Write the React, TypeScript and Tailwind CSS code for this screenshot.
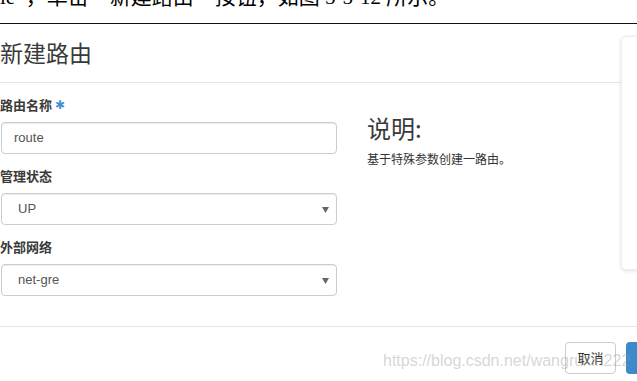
import React from 'react';

const cjk = { fontFamily: '"Noto Sans CJK SC", sans-serif' };

const Caret: React.FC = () => (
  <svg width="7" height="6" viewBox="0 0 7 6" className="absolute right-[7px] top-[13px]">
    <path d="M0 0 H7 L3.5 6 Z" fill="#666" />
  </svg>
);

interface FieldProps {
  label: string;
  value: string;
  required?: boolean;
  select?: boolean;
}

const Field: React.FC<FieldProps> = ({ label, value, required, select }) => (
  <div className="flex flex-col">
    <div className="flex items-center text-[13px] leading-[18px] font-bold text-[#3a3a3a] mb-[8px]">
      <span>{label}</span>
      {required && (
        <span className="ml-[3px] text-[12px] text-[#3d8fd8]" style={{ fontFamily: '"DejaVu Sans", sans-serif' }}>
          ✱
        </span>
      )}
    </div>
    <div className="relative h-[32px] ml-px border border-[#ccc] rounded-[4px] bg-white shadow-[inset_0_1px_1px_rgba(0,0,0,0.075)] flex items-center">
      <span
        className={`${select ? 'pl-[16px]' : 'pl-[12px]'} text-[13px] text-[#555]`}
        style={{ fontFamily: '"Liberation Sans", Arial, sans-serif' }}
      >
        {value}
      </span>
      {select && <Caret />}
    </div>
  </div>
);

export default function App() {
  return (
    <div className="relative w-[637px] h-[381px] overflow-hidden bg-white" style={cjk}>
      <div className="h-[24px] overflow-hidden border-b border-[#111]">
        <p
          className="-mt-[15px] text-[21px] leading-[21px] text-black whitespace-nowrap"
          style={{ fontFamily: '"Liberation Serif", "Noto Sans CJK SC", serif' }}
        >
          ie<span style={cjk}>”，</span>单击<span style={cjk}>“</span>新建路由<span style={cjk}>”</span>按钮<span style={cjk}>，</span>如图 5-5-12 所示<span style={cjk}>。</span>
        </p>
      </div>

      <div className="w-[720px]">
        <div className="h-[59px] flex items-center border-b border-[#e5e5e5]">
          <h2 className="text-[23px] leading-[26px] text-[#3a3a3a] font-normal -mt-[2px]">新建路由</h2>
        </div>

        <div className="flex pt-[13px] pb-[30px]">
          <div className="w-[337px] flex flex-col gap-[13px]">
            <Field label="路由名称" value="route" required />
            <Field label="管理状态" value="UP" select />
            <Field label="外部网络" value="net-gre" select />
          </div>
          <div className="ml-[30px] pt-[19px]">
            <h3 className="text-[24px] leading-[26px] text-[#3a3a3a] font-normal">说明:</h3>
            <p className="mt-[9px] text-[12px] leading-[17px] text-[#333]">基于特殊参数创建一路由。</p>
          </div>
        </div>

        <div className="border-t border-[#e5e5e5] pt-[15px] flex">
          <div className="ml-[565px] flex gap-[10px]">
            <button className="h-[32px] w-[51px] border border-[#ccc] rounded-[4px] bg-white text-[13px] text-[#333]">
              取消
            </button>
            <button className="h-[32px] px-[12px] rounded-[4px] bg-[#3b8acb] text-[13px] text-white">
              创建路由
            </button>
          </div>
        </div>
      </div>

      <div className="absolute left-[621px] top-[36px] w-[40px] h-[234px] bg-white rounded-[5px] border border-[#eee] shadow-[0_1px_4px_rgba(0,0,0,0.12)]" />

      <div
        className="absolute left-[383px] top-[350px] text-[16px] leading-[22px] text-[rgba(150,150,150,0.4)] whitespace-nowrap pointer-events-none"
        style={{ fontFamily: '"Liberation Sans", Arial, sans-serif' }}
      >
        https://blog.csdn.net/wangruxin222
      </div>
    </div>
  );
}
